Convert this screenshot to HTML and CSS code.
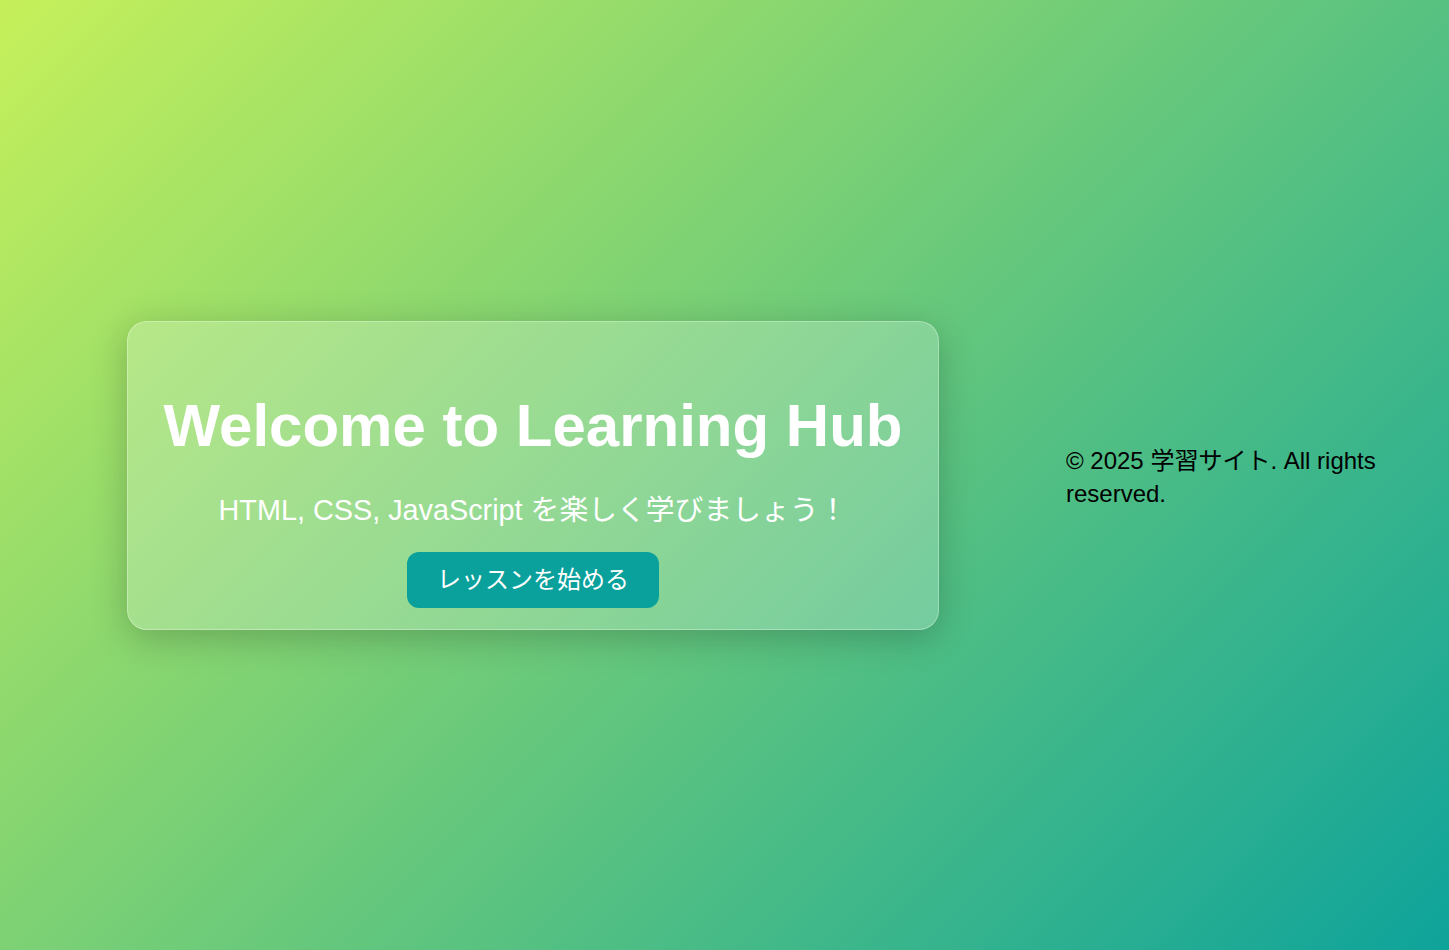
FILE: index.html
```html
<!DOCTYPE html>
<html lang="ja">
<head>
<meta charset="utf-8">
<title>Learning Hub</title>
<link rel="stylesheet" href="styles.css">
</head>
<body>
<main class="page">
  <section class="hero">
    <h1 class="hero-title">Welcome to Learning Hub</h1>
    <p class="hero-sub">HTML, CSS, JavaScript を楽しく学びましょう！</p>
    <a class="hero-btn" href="#">レッスンを始める</a>
  </section>
  <footer class="footer">© 2025 学習サイト. All rights reserved.</footer>
</main>
</body>
</html>
```

FILE: styles.css
```css
* { box-sizing: border-box; }
html, body { margin: 0; padding: 0; height: 100%; }
body {
  font-family: "Liberation Sans", Arial, "Noto Sans CJK JP", sans-serif;
  background: linear-gradient(135deg, #c6f05a 0%, #0ea39b 100%);
  color: #000;
}
.page {
  height: 100vh;
  display: flex;
  align-items: center;
  padding-left: 127px;
  gap: 127px;
}
.hero {
  flex: 0 0 auto;
  background: rgba(255, 255, 255, 0.22);
  border: 1px solid rgba(255, 255, 255, 0.3);
  border-radius: 20px;
  box-shadow: 0 8px 36px rgba(0, 0, 0, 0.22);
  padding: 20px 35.5px 21px;
  text-align: center;
  color: #fff;
}
.hero-title {
  margin: 48px 0 0;
  font-size: 60px;
  line-height: 72px;
  font-weight: 700;
  white-space: nowrap;
}
.hero-sub {
  margin: 29px 0 22px;
  font-size: 28.8px;
  line-height: 39px;
}
.hero-btn {
  display: inline-block;
  height: 56px;
  line-height: 56px;
  padding: 0 30px;
  font-size: 24px;
  color: #fff;
  text-decoration: none;
  background: #0aa19c;
  border-radius: 12px;
  vertical-align: top;
}
.footer {
  flex: 1 1 auto;
  font-size: 24px;
  line-height: 33px;
  padding: 3px 20px 0 0;
}
```
